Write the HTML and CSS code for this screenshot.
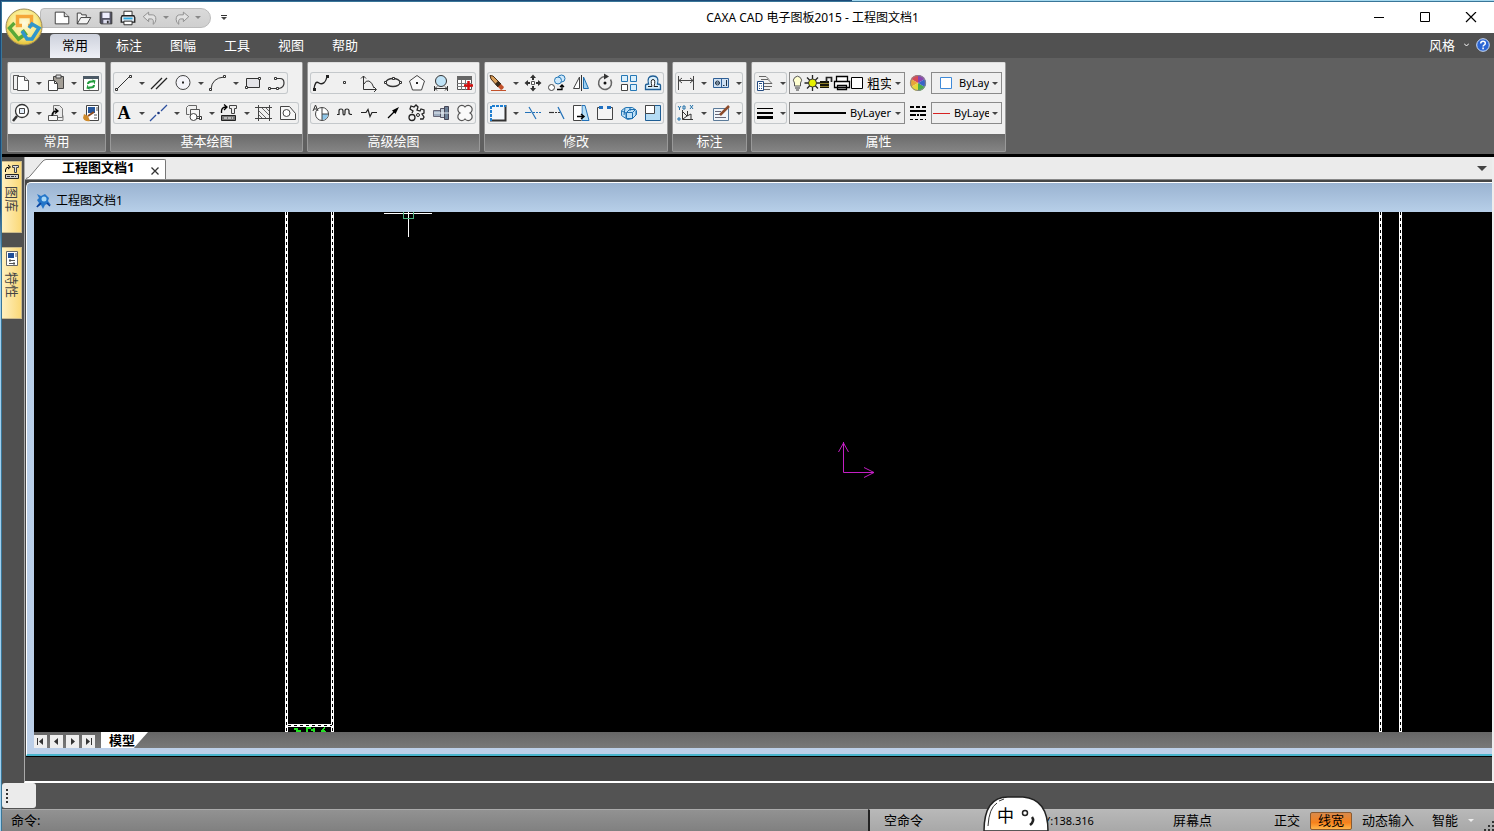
FILE: index.html
```html
<!DOCTYPE html>
<html lang="zh-CN">
<head>
<meta charset="utf-8">
<title>CAXA CAD 电子图板2015 - 工程图文档1</title>
<link rel="stylesheet" href="styles.css">
</head>
<body>
<div class="app">
  <header class="titlebar">
    <button class="orb" aria-label="菜单"><svg viewBox="0 0 38 38" width="38" height="38">
      <defs><radialGradient id="gold" cx=".5" cy=".4" r=".62"><stop offset="0" stop-color="#fffbe0"/><stop offset=".6" stop-color="#f8ea8a"/><stop offset="1" stop-color="#e3bb2a"/></radialGradient></defs>
      <circle cx="19" cy="19" r="18" fill="url(#gold)" stroke="#9a8a5a"/>
      <path d="M17 17.500h-4.500v-9h14v9H23" fill="none" stroke="#f5a738" stroke-width="3.500"/>
      <path d="M9.500 15L4.500 20l9 11 7-5-3-4" fill="none" stroke="#5aa838" stroke-width="3.500"/>
      <path d="M17 23l5 8h5l7-11-7-4-3 4" fill="none" stroke="#2f96cc" stroke-width="3.500"/></svg></button>
    <div class="quick">
      <button aria-label="新建"><svg viewBox="0 0 22 20"><path d="M3.500 3.500h10l5 5v8h-15z" fill="#fff" stroke="#333"/><path d="M13.500 3.500v5h5" fill="#ddd" stroke="#333"/></svg></button>
      <button aria-label="打开"><svg viewBox="0 0 22 20"><path d="M3.500 16.500v-12h4l1 2h5v3h5l-4 7z" fill="#f4f4f4" stroke="#333"/><path d="M3.500 16.500l4-7h6" fill="none" stroke="#333"/></svg></button>
      <button aria-label="保存"><svg viewBox="0 0 22 20"><path d="M4.500 3.500h13v13h-12l-1-1z" fill="#556" stroke="#333"/><path d="M7 4h8v6H7z" fill="#eef"/><path d="M8 12h7v4H8z" fill="#dde"/><path d="M12 13h2v3h-2z" fill="#333"/></svg></button>
      <button aria-label="打印"><svg viewBox="0 0 22 20"><path d="M6.500 8V2.500h9V8" fill="#fff" stroke="#222"/><path d="M4.500 7.500h13l1 2v5h-15v-5z" fill="#dfe8f0" stroke="#222" stroke-width="1.500"/><path d="M6 10.500h10" stroke="#2ba8e0" stroke-width="2"/><path d="M6.500 13.500h9v4h-9z" fill="#fff" stroke="#222"/></svg></button>
      <button aria-label="撤销"><svg viewBox="0 0 22 20"><path d="M3.500 8.500l6-5v3h4q4 0 4 5 0 4-3 5.500 1-6-2-6h-3v3z" fill="#e2e2e2" stroke="#8a8a8a"/></svg></button>
      <button class="more" aria-label="撤销列表"></button>
      <button aria-label="重做"><svg viewBox="0 0 22 20"><path d="M18.500 8.500l-6-5v3h-4q-4 0-4 5 0 4 3 5.500-1-6 2-6h3v3z" fill="#e2e2e2" stroke="#8a8a8a"/></svg></button>
      <button class="more" aria-label="重做列表"></button>
    </div>
    <button class="more custom" aria-label="自定义"></button>
    <h1>CAXA CAD 电子图板2015 - 工程图文档1</h1>
    <div class="winbtns">
      <button aria-label="最小化"><svg viewBox="0 0 12 12"><path d="M1 5.500h10" stroke="#000"/></svg></button>
      <button aria-label="最大化"><svg viewBox="0 0 12 12"><path d="M1.500 .5h9v9h-9z" fill="none" stroke="#000"/></svg></button>
      <button aria-label="关闭"><svg viewBox="0 0 12 12"><path d="M1 0l10 10M11 0L1 10" stroke="#000" stroke-width="1.200"/></svg></button>
    </div>
  </header>

  <nav class="menu">
    <button class="on">常用</button><button>标注</button><button>图幅</button><button>工具</button><button>视图</button><button>帮助</button>
    <button class="style">风格 <svg viewBox="0 0 5 4" width="5" height="4"><path d="M0 .5l2.500 2.500L5 .5" fill="none" stroke="#fff"/></svg></button>
    <button class="help" aria-label="帮助"><svg viewBox="0 0 14 14" width="14" height="14"><circle cx="7" cy="7" r="6.300" fill="#2c66d4" stroke="#cfe0fb"/><path d="M4.700 5.500q0-2.300 2.300-2.300t2.300 2q0 1.200-1.300 1.900-.9.500-.9 1.400" fill="none" stroke="#fff" stroke-width="1.500"/><path d="M6.300 9.600h1.600v1.600H6.300z" fill="#fff"/></svg></button>
  </nav>

  <div class="ribbon">
    <section class="panel">
      <div class="rows">
        <div class="tools">
          <button aria-label="复制"><svg viewBox="0 0 22 22"><path d="M8 17.500H3.500v-14H9" fill="none" stroke="#555"/><path d="M7.500 4.500h7l4 4v10h-11z" fill="#fff" stroke="#555"/><path d="M14.500 4.500v4h4" fill="#ddd" stroke="#555"/></svg></button>
          <button class="more" aria-label="更多"></button>
          <button aria-label="粘贴"><svg viewBox="0 0 22 22"><path d="M8.500 4.500h10v12h-10z" fill="#a39e96" stroke="#444"/><path d="M11 3h5v3h-5z" fill="#ddd" stroke="#444"/><path d="M3.500 8.500h6l3 3v7h-9z" fill="#fff" stroke="#444"/><path d="M9.500 8.500v3h3" fill="none" stroke="#444"/></svg></button>
          <button class="more" aria-label="更多"></button>
          <button aria-label="刷新"><svg viewBox="0 0 22 22"><path d="M3.500 4.500h15v14h-15z" fill="#fff" stroke="#555"/><path d="M3 4h16v3H3z" fill="#4c5a66"/><path d="M8 12q0-2.500 3.500-2.500H13M14 13q0 2.500-3.500 2.500H9" fill="none" stroke="#1f9a3a" stroke-width="2"/><path d="M12 7.500l3.500 1-1 4zM10 17.500l-3.500-1 1-4z" fill="#1f9a3a"/></svg></button>
        </div>
        <div class="tools">
          <button aria-label="缩放"><svg viewBox="0 0 22 22"><circle cx="12" cy="9" r="6.500" fill="#fff" stroke="#333" stroke-width="1.300"/><path d="M9.500 6.500h5v5h-5z" fill="#e4eefa" stroke="#444"/><path d="M7 14l-4 5" stroke="#333" stroke-width="2.500"/></svg></button>
          <button class="more" aria-label="更多"></button>
          <button aria-label="插入块"><svg viewBox="0 0 22 22"><path d="M8.500 3.500h6l3 3v9h-9z" fill="#e9e9e9" stroke="#777"/><path d="M3.500 13.500h9v5h-9z" fill="#f6f6f6" stroke="#555"/><path d="M17 13.500h1v5h-5" fill="none" stroke="#777"/><path d="M7 14q0-5 5-5M10 6.500l3 2.500-3 2.500" fill="none" stroke="#000" stroke-width="1.300"/></svg></button>
          <button class="more" aria-label="更多"></button>
          <button aria-label="特性匹配"><svg viewBox="0 0 22 22"><path d="M6.500 3.500h12v15h-12z" fill="#fff" stroke="#444"/><path d="M8 5h7v6H8z" fill="#27579c"/><path d="M16 6h2M16 8h2M14 13h3M14 16h3" stroke="#555"/><path d="M4 12l4 2 2 5q-5 1-7-3z" fill="#d08b2c"/><path d="M8 14l6-4" stroke="#8b4a1e" stroke-width="2"/></svg></button>
        </div>
      </div>
      <h2>常用</h2>
    </section>

    <section class="panel">
      <div class="rows">
        <div class="tools">
          <button aria-label="直线"><svg viewBox="0 0 22 22"><path d="M4 17L17 4" stroke="#333"/><path d="M2.500 16.500h2v2h-2zM16.500 3.500h2v2h-2z" fill="#fff" stroke="#333"/></svg></button>
          <button class="more" aria-label="更多"></button>
          <button aria-label="平行线"><svg viewBox="0 0 22 22"><path d="M3 17L14 6M8 17L19 6" stroke="#222" stroke-width="1.300"/></svg></button>
          <button aria-label="圆"><svg viewBox="0 0 22 22"><circle cx="11" cy="10.500" r="7" fill="#f4f4f9" stroke="#444"/><path d="M10 9.500h2v2h-2z" fill="#222"/></svg></button>
          <button class="more" aria-label="更多"></button>
          <button aria-label="圆弧"><svg viewBox="0 0 22 22"><path d="M4 17Q5 6 17 5" fill="none" stroke="#333"/><path d="M2.500 16.500h2v2h-2zM16.500 3.500h2v2h-2z" fill="#fff" stroke="#333"/></svg></button>
          <button class="more" aria-label="更多"></button>
          <button aria-label="矩形"><svg viewBox="0 0 22 22"><path d="M4.500 6.500h13v9h-13z" fill="#e4e4e8" stroke="#333"/><path d="M3.500 14.500h2v2h-2zM16.500 5.500h2v2h-2z" fill="#fff" stroke="#333"/></svg></button>
          <button aria-label="多段线"><svg viewBox="0 0 22 22"><path d="M4 16.500h7M11 6.500h3q4 0 4 4.500t-5 5.500" fill="none" stroke="#333" stroke-width="1.200"/><path d="M2.500 15.500h2v2h-2zM10.500 15.500h2v2h-2zM8.500 5.500h2v2h-2z" fill="#fff" stroke="#333"/></svg></button>
        </div>
        <div class="tools">
          <button aria-label="文字" class="letter">A</button>
          <button class="more" aria-label="更多"></button>
          <button aria-label="中心线"><svg viewBox="0 0 22 22"><path d="M2 19l6-6M13 9l6-6" stroke="#2c4f9e" stroke-width="1.300"/><circle cx="10.500" cy="11" r="1.300" fill="#17337c"/></svg></button>
          <button class="more" aria-label="更多"></button>
          <button aria-label="块"><svg viewBox="0 0 22 22"><path d="M3.500 12.500v-7l2-2h8v4M3.500 12.500h3" fill="none" stroke="#666"/><path d="M7.500 7.500h9v7h-9z" fill="#f6f6f6" stroke="#555"/><circle cx="10.500" cy="15" r="3.500" fill="#fff" stroke="#444"/><path d="M14 16.500h4" stroke="#444"/><path d="M16.500 14.500h2v3h-2z" fill="#fff" stroke="#333"/></svg></button>
          <button class="more" aria-label="更多"></button>
          <button aria-label="图库"><svg viewBox="0 0 22 22"><path d="M3.500 11v-2q0-4 5-4M6 2.500L9 5 6 8" fill="none" stroke="#000" stroke-width="1.300"/><path d="M11.500 3.500h7v3h-2v5h-3v-5h-2z" fill="#eee" stroke="#444"/><path d="M3.500 13.500h14v5h-14z" fill="#777" stroke="#222"/><path d="M6 16h9" stroke="#fff" stroke-dasharray="3 1"/></svg></button>
          <button class="more" aria-label="更多"></button>
          <button aria-label="剖面线"><svg viewBox="0 0 22 22"><path d="M2 5.500h17M2 16.500h17M5.500 3v16M16.500 3v16" stroke="#444"/><path d="M6 9l7 7M6 13l3 3M9 6l7 7M13 6l3 3" stroke="#666"/></svg></button>
          <button aria-label="填充"><svg viewBox="0 0 22 22"><path d="M3.500 4.500h9l6 7v6h-15z" fill="#f7f7f7" stroke="#444"/><circle cx="9.500" cy="11" r="3.500" fill="#fff" stroke="#444"/></svg></button>
        </div>
      </div>
      <h2>基本绘图</h2>
    </section>

    <section class="panel">
      <div class="rows">
        <div class="tools">
          <button aria-label="样条"><svg viewBox="0 0 22 22"><path d="M4 17c1-6 2-8 5-6s7 0 8-7" fill="none" stroke="#222" stroke-width="1.300"/><path d="M3 16h3v3H3zM16 3h3v3h-3z" fill="#222"/></svg></button>
          <button aria-label="点"><svg viewBox="0 0 22 22"><path d="M9.500 9.500h2v2h-2z" fill="#fff" stroke="#333"/></svg></button>
          <button aria-label="公式曲线"><svg viewBox="0 0 22 22"><path d="M5.500 4v13.500H18M3 6.500L5.500 4 8 6.500M16 15l2.500 2.500L16 20M6 12q2-4 5-3t5 7" fill="none" stroke="#333"/></svg></button>
          <button aria-label="椭圆"><svg viewBox="0 0 22 22"><ellipse cx="11" cy="10.500" rx="7" ry="4" fill="none" stroke="#333" stroke-width="1.300"/><path d="M10.500 5.500h2v2h-2zM2.500 9.500h2v2h-2zM17.500 9.500h2v2h-2z" fill="#fff" stroke="#333"/></svg></button>
          <button aria-label="正多边形"><svg viewBox="0 0 22 22"><path d="M11 3.500l7.500 5.500-3 9h-9l-3-9z" fill="#fafafa" stroke="#444"/><path d="M10 10h2v2h-2z" fill="#222"/></svg></button>
          <button aria-label="局部放大"><svg viewBox="0 0 22 22"><circle cx="11" cy="9" r="5.500" fill="#bfe3f7" stroke="#333"/><path d="M4.500 19v-5M17.500 19v-5M5 16.500h12M7 14.500l-2 2 2 2M15 14.500l2 2-2 2" fill="none" stroke="#333"/></svg></button>
          <button aria-label="表格"><svg viewBox="0 0 22 22"><path d="M3.500 4.500h14v13h-14z" fill="#fff" stroke="#555"/><path d="M3 4h15v4H3z" fill="#666"/><path d="M3 11.500h15M3 14.500h15M7.500 8v10M11.500 8v10" stroke="#777"/><path d="M14.500 9v9M10 13.500h9" stroke="#d40f0f" stroke-width="2.500"/></svg></button>
        </div>
        <div class="tools">
          <button aria-label="箭头圆"><svg viewBox="0 0 22 22"><circle cx="12" cy="12" r="6.500" fill="#fff" stroke="#444"/><path d="M12 12h6a6 6 0 0 1-6 6z" fill="#8fc6e8"/><path d="M12 5.500v13M12 12h6.500" stroke="#444"/><path d="M3 9l2.500-6L8 9M4 7h3" fill="none" stroke="#333"/></svg></button>
          <button aria-label="波浪线"><svg viewBox="0 0 22 22"><path d="M3 12.500h2V9q0-2 2-2t2 2v2q0 2 1 2t1-2V9q0-2 2-2t2 2v2q0 1.500 3 1.500" fill="none" stroke="#222" stroke-width="1.200"/></svg></button>
          <button aria-label="双折线"><svg viewBox="0 0 22 22"><path d="M3 10.500h5l2-3 2 7 2-4h5" fill="none" stroke="#222" stroke-width="1.200"/></svg></button>
          <button aria-label="箭头"><svg viewBox="0 0 22 22"><path d="M6 16l7-7" stroke="#000" stroke-width="1.300"/><path d="M17 5l-3.500 7-3.500-3.500z" fill="#000"/></svg></button>
          <button aria-label="齿轮"><svg viewBox="0 0 22 22"><path d="M6 11l1-2-3-2 1-3 3 1 2-2 2 2-1 3 3 1 1-2 3 1v3l-2 1 2 3-1 2h-3" fill="none" stroke="#222" stroke-width="1.300"/><circle cx="6" cy="15.500" r="3" fill="none" stroke="#222" stroke-width="1.300"/><circle cx="12" cy="13" r="1.500" fill="none" stroke="#222"/></svg></button>
          <button aria-label="孔轴"><svg viewBox="0 0 22 22"><path d="M3.500 8.500h7v6h-7z" fill="#9dadc0" stroke="#667"/><path d="M10.500 6.500h4v9h-4z" fill="#c2cdd8" stroke="#556"/><path d="M14.500 4.500h4v13h-4z" fill="#6d8097" stroke="#445"/><path d="M4 11h15" stroke="#e8eef5"/></svg></button>
          <button aria-label="云线"><svg viewBox="0 0 22 22"><path d="M6 11a4 4 0 1 1 5-6 4 4 0 1 1 5 6 4 4 0 1 1-5 6 4 4 0 1 1-5-6z" fill="#fafafa" stroke="#555" stroke-width="1.200"/></svg></button>
        </div>
      </div>
      <h2>高级绘图</h2>
    </section>

    <section class="panel">
      <div class="rows">
        <div class="tools">
          <button aria-label="删除"><svg viewBox="0 0 22 22"><path d="M3 3.500l3 .5 8 8-3 3-7-8z" fill="#d9a05c" stroke="#4a2c12"/><path d="M11 9l3 3-3 3-3-3z" fill="#3a2a1a"/><path d="M14 12l3 3q-1 3-3 3l-3-3z" fill="#c2512b"/><path d="M4 18.500h15" stroke="#c2512b"/></svg></button>
          <button class="more" aria-label="更多"></button>
          <button aria-label="平移"><svg viewBox="0 0 22 22"><path d="M11 2.500l3 3.500H8zM11 19.500l3-3.500H8zM2.500 11L6 8v6zM19.500 11L16 8v6z" fill="#333"/><path d="M11 6v2M11 14v2M6 11h2M14 11h2" stroke="#333" stroke-width="2"/><path d="M9.500 9.500h3v3h-3z" fill="#fff" stroke="#555"/></svg></button>
          <button aria-label="平移复制"><svg viewBox="0 0 22 22"><circle cx="15.500" cy="6.500" r="3.500" fill="#cfe9fb" stroke="#2577b5"/><circle cx="12" cy="8.500" r="3.500" fill="#cfe9fb" stroke="#2577b5"/><circle cx="5.500" cy="15.500" r="3" fill="#fff" stroke="#444"/><path d="M11 17.500h5v-4M14 15l2-2 2 2" fill="none" stroke="#000" stroke-width="1.300"/></svg></button>
          <button aria-label="镜像"><svg viewBox="0 0 22 22"><path d="M9.500 5v11.500h-6z" fill="#fff" stroke="#444"/><path d="M13.500 5v11.500h5z" fill="#9fd0f0" stroke="#1e6fb0"/><path d="M11.500 3v16" stroke="#333"/></svg></button>
          <button aria-label="旋转"><svg viewBox="0 0 22 22"><path d="M11 4.500a6.500 6.500 0 1 0 5.500 3" fill="none" stroke="#666" stroke-width="1.500"/><path d="M10 1.500l5 3-5 3z" fill="#333"/><circle cx="11" cy="11" r="1.500" fill="#111"/></svg></button>
          <button aria-label="阵列"><svg viewBox="0 0 22 22"><path d="M3.500 3.500h6v6h-6zM12.500 3.500h6v6h-6zM12.500 12.500h6v6h-6z" fill="#d9effc" stroke="#2577b5"/><path d="M3.500 12.500h6v6h-6z" fill="#fff" stroke="#444"/></svg></button>
          <button aria-label="偏移"><svg viewBox="0 0 22 22"><path d="M3.500 17.500v-4q0-1.500 3-1.500-2-8 4.500-8t4.500 8q3 0 3 1.500v4z" fill="#d9effc" stroke="#1e5d94" stroke-width="1.300"/><path d="M6 14.500h4q-2-7 1-7t1 7h4" fill="#fff" stroke="#222"/></svg></button>
        </div>
        <div class="tools">
          <button aria-label="裁剪框"><svg viewBox="0 0 22 22"><path d="M3.500 3.500h15v15h-15z" fill="#f3f7fb"/><path d="M18.500 3v15.500H3" fill="none" stroke="#333" stroke-width="2"/><path d="M4 19V4H19" fill="none" stroke="#1f7ed0" stroke-width="2" stroke-dasharray="3 1"/></svg></button>
          <button class="more" aria-label="更多"></button>
          <button aria-label="裁剪"><svg viewBox="0 0 22 22"><path d="M3 10.500h6M7 5l7 12" stroke="#2271b8" stroke-width="1.200"/><path d="M11 10.500h8" stroke="#2271b8" stroke-dasharray="2 1"/></svg></button>
          <button aria-label="延伸"><svg viewBox="0 0 22 22"><path d="M3 10.500h5" stroke="#333" stroke-width="1.200"/><path d="M9 10.500h5" stroke="#333" stroke-dasharray="2 1"/><path d="M12 5l6 12" stroke="#2271b8" stroke-width="1.200"/></svg></button>
          <button aria-label="拉伸"><svg viewBox="0 0 22 22"><path d="M12 3.500h3l4 15h-7z" fill="#b9dff5" stroke="#2271b8"/><path d="M11.500 3.500h-8v15h8" fill="#fff" stroke="#444"/><path d="M7 14.500h6M11 12l3 2.500-3 2.500" fill="none" stroke="#000" stroke-width="1.500"/></svg></button>
          <button aria-label="打断"><svg viewBox="0 0 22 22"><path d="M6 5.500H3.500v12h15v-12H16" fill="#f4f4f4" stroke="#444"/><path d="M5 5.500h4M13 5.500h4" stroke="#1f6fc0" stroke-width="3"/></svg></button>
          <button aria-label="分解"><svg viewBox="0 0 22 22"><path d="M3.500 8.500l4-3h7l4 3v4l-4 4-5 1-6-4z" fill="#bfe1f7" stroke="#2577b5"/><path d="M8.500 10.500h6v6h-6zM8.500 10.500l3-3h6l-3 3M4 9l4 2v5M7 6l-1 7M12 5v4M18 9v4l-3 3" fill="none" stroke="#1e6fb0"/></svg></button>
          <button aria-label="缩放图形"><svg viewBox="0 0 22 22"><path d="M3.500 3.500h15v15h-15z" fill="#b5dcf4" stroke="#1e5d94"/><path d="M3.500 3.500h9v8h-9z" fill="#fff" stroke="#444"/></svg></button>
        </div>
      </div>
      <h2>修改</h2>
    </section>

    <section class="panel">
      <div class="rows">
        <div class="tools">
          <button aria-label="尺寸标注"><svg viewBox="0 0 22 22"><path d="M3.500 4v14M18.500 4v14M4 8.500h14M7 6L4 8.500 7 11M15 6l3 2.500-3 2.500" fill="none" stroke="#444"/></svg></button>
          <button class="more" aria-label="更多"></button>
          <button aria-label="形位公差"><svg viewBox="0 0 22 22"><path d="M3.500 6.500h15v9h-15z" fill="#cfe0f2" stroke="#2f5f96"/><path d="M11.500 6v10" stroke="#2f5f96"/><circle cx="7.500" cy="11" r="2" fill="none" stroke="#234"/><path d="M5 11h5M16.500 8v6M13 13.500h1.500" stroke="#234"/></svg></button>
          <button class="more" aria-label="更多"></button>
        </div>
        <div class="tools">
          <button aria-label="坐标标注"><svg viewBox="0 0 22 22"><path d="M7.500 8v9.500H18M8 10l4 4 4-2v5M12.500 9v5M12 14l-4 3" fill="none" stroke="#333"/><path d="M3 4l1.500 2L6 4M4.500 6v2M15 3l3 4M18 3l-3 4M8 4h2v3H8zM3 16h2v2H3z" fill="none" stroke="#1f6fa8"/></svg></button>
          <button class="more" aria-label="更多"></button>
          <button aria-label="技术要求"><svg viewBox="0 0 22 22"><path d="M3.500 6.500h15v12h-15z" fill="#f1f5f9" stroke="#5b7a99"/><path d="M5 9.500h6M5 12.500h7M5 15.500h11" stroke="#667"/><path d="M10 13l9-9" stroke="#8c4b2b" stroke-width="2.500"/></svg></button>
          <button class="more" aria-label="更多"></button>
        </div>
      </div>
      <h2>标注</h2>
    </section>

    <section class="panel">
      <div class="rows">
        <div class="props">
          <div class="tools">
            <button aria-label="图层"><svg viewBox="0 0 22 22"><path d="M5 4.500h7l3 3M7 7.500h7l4 4M10 11.500h8M10 14.500h8M10 17.500h6" fill="none" stroke="#666"/><path d="M3.500 9.500h6v9h-6z" fill="#fff" stroke="#234a80"/><path d="M5 11.500h3M5 14h1M7 14h1M5 16.500h1M7 16.500h1" stroke="#234a80"/></svg></button>
            <button class="more" aria-label="更多"></button>
          </div>
          <div class="combo wide layer">
            <svg viewBox="0 0 73 20" width="73" height="20"><path d="M4.500 10a4 4 0 1 1 6 0v3h-6z" fill="#ffffd0" stroke="#555"/><path d="M5 15h5M6 17h3" stroke="#333"/><path d="M22.500 2v16M14.500 10h16M17 4.500l11 11M28 4.500l-11 11" stroke="#222" stroke-width="1.300"/><circle cx="22.500" cy="10" r="4" fill="#e6f000" stroke="#333"/><path d="M30 8h9v7h-9z" fill="#15150a"/><path d="M30 10.500h9M30 13.500h9" stroke="#8f7f2a"/><path d="M36.500 9V4.500h5V9" fill="none" stroke="#222" stroke-width="1.700"/><path d="M46.500 8V3.500h11V8M44.500 8.500h15v6h-15zM47.500 12.500h9v4h-9z" fill="#fff" stroke="#000" stroke-width="1.300"/><path d="M61.500 4.500h11v11h-11z" fill="#fff" stroke="#000"/></svg>
            <select aria-label="图层"><option>粗实线层</option></select>
          </div>
          <button class="ico" aria-label="颜色"><svg viewBox="0 0 22 22"><path d="M11 11V3a8 8 0 0 1 7 4z" fill="#8a44b0"/><path d="M11 11V3a8 8 0 0 0-7 4z" fill="#d94a56"/><path d="M11 11L4 7a8 8 0 0 0 0 8z" fill="#e7a53a"/><path d="M11 11l-7 4a8 8 0 0 0 7 4z" fill="#e7d83a"/><path d="M11 11v8a8 8 0 0 0 7-4z" fill="#4bac4b"/><path d="M11 11l7-4a8 8 0 0 1 0 8z" fill="#3a64c8"/><circle cx="11" cy="11" r="7.500" fill="none" stroke="#888"/></svg></button>
          <div class="combo">
            <svg viewBox="0 0 23 20" width="23" height="20"><path d="M8.500 4.500h11v11h-11z" fill="#fff" stroke="#3f8ad8"/></svg>
            <select aria-label="颜色"><option>ByLayer</option></select>
          </div>
        </div>
        <div class="props">
          <div class="tools">
            <button aria-label="线宽"><svg viewBox="0 0 22 22"><path d="M3 6.500h16" stroke="#000"/><path d="M3 11h16" stroke="#000" stroke-width="2"/><path d="M3 15.500h16" stroke="#000" stroke-width="3"/></svg></button>
            <button class="more" aria-label="更多"></button>
          </div>
          <div class="combo wide">
            <svg viewBox="0 0 56 20" width="56" height="20"><path d="M4 10h52" stroke="#000" stroke-width="2"/></svg>
            <select aria-label="线宽"><option>ByLayer</option></select>
          </div>
          <button class="ico" aria-label="线型"><svg viewBox="0 0 22 22"><path d="M3 5h16" stroke="#000" stroke-width="2" stroke-dasharray="4 2"/><path d="M3 9h16" stroke="#000" stroke-width="2"/><path d="M3 13h16" stroke="#000" stroke-width="2" stroke-dasharray="6 1 2 1"/><path d="M3 17.500h16" stroke="#000" stroke-dasharray="3 2"/></svg></button>
          <div class="combo">
            <svg viewBox="0 0 18 20" width="18" height="20"><path d="M1 10h17v1H1z" fill="#d62222"/></svg>
            <select aria-label="线型"><option>ByLayer</option></select>
          </div>
        </div>
      </div>
      <h2>属性</h2>
    </section>
  </div>

  <main class="work">
    <aside class="dock">
      <button><svg viewBox="0 0 16 16" width="16" height="16"><path d="M1.500 8V6q0-3 4-3M4 1l2.500 2L4 5" fill="none" stroke="#000"/><path d="M8.500 1.500h6v2h-2v5h-2v-5h-2z" fill="#ddd" stroke="#444"/><path d="M1.500 10.500h13v4h-13z" fill="#ccc" stroke="#222"/><path d="M3 12.500h9" stroke="#333" stroke-dasharray="3 1"/></svg><span>图库</span></button>
      <button><svg viewBox="0 0 16 16" width="16" height="16"><path d="M2.500 1.500h11v14h-11z" fill="#fff" stroke="#666"/><path d="M4 3h6v5H4z" fill="#204e98"/><path d="M11 4h2M11 6h2M5 10.500h6M5 13.500h6M6 9v3M10 12v3" stroke="#555"/></svg><span>特性</span></button>
    </aside>
    <div class="mdi">
      <div class="doctabs">
        <div class="doctab"><svg viewBox="0 0 20 20" width="20" height="20"><path d="M0 20Q2 20 4 17L16 3Q18 .5 20 .5V20z" fill="#fff"/><path d="M0 19.500Q3 19 5 16L16 3Q18 .5 20 .5" fill="none" stroke="#777"/></svg><button class="name">工程图文档1</button><button class="x" aria-label="关闭文档"><svg viewBox="0 0 8 8" width="8" height="8"><path d="M.5.5l7 7M7.500.5l-7 7" stroke="#333" stroke-width="1.300"/></svg></button></div>
        <button class="more big" aria-label="文档列表"></button>
      </div>
      <div class="child">
        <div class="childtitle"><svg viewBox="0 0 16 16" width="16" height="16"><path d="M2 1l4 2 4-2 4 4-1 3 3 4-4-1-2 1-2 4-2-4-5 2 3-4-2-3 2-2z" fill="#2476c9"/><circle cx="9" cy="6" r="2.500" fill="#a6d7f7"/><path d="M2 14l4-4M12 10l3 3" stroke="#0c3f98" stroke-width="1.500"/></svg>工程图文档1</div>
        <svg class="canvas" role="img" aria-label="图形窗口">
          <g stroke="#fff" stroke-width="3" shape-rendering="crispEdges"><path d="M252.500 0v521M298.500 0v521M1346.500 0v521M1366.500 0v521M252 513.500h47"/></g>
          <g stroke="#000" stroke-dasharray="3 3" shape-rendering="crispEdges"><path d="M252.500 0v521M298.500 0v521M1346.500 0v521M1366.500 0v521M254 513.500h44"/></g>
          <path d="M350 1.500h48M374.500 0v25" stroke="#fff" shape-rendering="crispEdges"/>
          <path d="M369.500 0v6.500h10V0" fill="none" stroke="#4fb583" shape-rendering="crispEdges"/>
          <path d="M809.500 230v30.500H840M804.500 240l5-9 5 9M830 255.500l10 5-10 5" fill="none" stroke="#c41fc4"/>
          <path d="M260 517h3v4M263 519h3v2M272 516h5M273 515v6M277 518h3M280 516v5M287 519l4-3M289 518v3M290 519l3 2" fill="none" stroke="#22e022" stroke-width="1.500" shape-rendering="crispEdges"/>
        </svg>
        <div class="sheets">
          <button aria-label="首页"><svg viewBox="0 0 13 13"><path d="M3.500 3v7" stroke="#333"/><path d="M9 3v7L5 6.500z" fill="#333"/></svg></button>
          <button aria-label="上一页"><svg viewBox="0 0 13 13"><path d="M8 3v7L4 6.500z" fill="#333"/></svg></button>
          <button aria-label="下一页"><svg viewBox="0 0 13 13"><path d="M5 3v7l4-3.500z" fill="#333"/></svg></button>
          <button aria-label="末页"><svg viewBox="0 0 13 13"><path d="M4 3v7l4-3.500z" fill="#333"/><path d="M9.500 3v7" stroke="#333"/></svg></button>
          <button class="model">模型</button>
        </div>
      </div>
    </div>
  </main>

  <div class="cmddock"><div class="grip"></div></div>

  <footer class="status">
    <div class="cmd"><label for="cmd">命令:</label><input id="cmd" type="text"></div>
    <div class="info">
      <span class="state">空命令</span>
      <span class="coord">Y:138.316</span>
      <span class="snap">屏幕点</span>
      <button>正交</button><button class="hot">线宽</button><button>动态输入</button><button>智能</button><button class="more light" aria-label="捕捉方式"></button>
      <svg class="size" viewBox="0 0 10 10" width="10" height="10"><path d="M8 0h2v2H8zM4 4h2v2H4zM8 4h2v2H8zM0 8h2v2H0zM4 8h2v2H4zM8 8h2v2H8z" fill="#333"/></svg>
      <div class="ime"><svg viewBox="0 0 66 35" width="66" height="35"><path d="M1 35Q1 1 25 1h15Q65 3 65 35z" fill="#fff" stroke="#222" stroke-width="1.500"/><path d="M5 30q1-18 9-23M16 5l5-2" fill="none" stroke="#333"/><circle cx="42" cy="17" r="2.500" fill="none" stroke="#222" stroke-width="1.500"/><path d="M49 21q3 4-2 8" fill="none" stroke="#222" stroke-width="2.500"/></svg><span>中</span></div>
    </div>
  </footer>
</div>
</body>
</html>
```
FILE: styles.css
```css
* { box-sizing: border-box; }
body {
  margin: 0;
  font: 13px/18px "Noto Sans", "Noto Sans CJK SC", sans-serif;
  color: #000;
}
h1, h2 { margin: 0; font-weight: 400; }
button {
  border: 0;
  padding: 0;
  margin: 0;
  background: none;
  font: inherit;
  color: inherit;
}
svg { display: block; flex: none; }

.app {
  height: 100vh;
  display: flex;
  flex-direction: column;
  padding: 2px 0 0 2px;
  background:
    linear-gradient(90deg, #1b4a78 57%, #a5d9ef 57%) top / 100% 1px no-repeat,
    linear-gradient(#1b4a78 25%, #9fd0ee 32%) left / 1px 100% no-repeat,
    #3a7698;
  overflow: hidden;
}

.more {
  width: 9px;
  flex: none;
  display: flex;
  align-items: center;
  justify-content: center;
}
.more::before {
  content: "";
  border: 3px solid transparent;
  border-top-color: #444;
  border-bottom: 0;
}

/* title bar */
.titlebar {
  flex: none;
  height: 31px;
  display: flex;
  align-items: center;
  background: #fff;
  position: relative;
}
.orb { position: absolute; left: 3px; top: 6px; z-index: 2; }
.quick {
  margin-left: 38px;
  padding: 0 7px 0 10px;
  height: 20px;
  display: flex;
  align-items: stretch;
  border: 1px solid #bbb;
  border-radius: 0 10px 10px 0;
  border-top-left-radius: 4px;
  background: linear-gradient(#dadada, #cfcfcf);
}
.quick svg { width: 22px; height: 18px; }
.quick .more { width: 10px; }
.quick .more::before { border-top-color: #888; }
.custom { width: 26px; flex-direction: column; gap: 1px; }
.custom::before { order: 2; }
.custom::after { content: ""; width: 6px; height: 1px; background: #333; }
.titlebar h1 {
  flex: 1;
  padding-left: 32px;
  text-align: center;
  font-size: 12px;
}
.winbtns { display: flex; align-self: stretch; }
.winbtns button { width: 46px; display: grid; place-items: center; }
.winbtns svg { width: 12px; height: 12px; }

/* menu */
.menu {
  flex: none;
  height: 25px;
  display: flex;
  gap: 4px;
  padding: 1px 4px 0 48px;
  background: #515151;
  color: #fff;
}
.menu button { padding: 0 12px 2px; }
.menu .on {
  color: #000;
  border-radius: 4px 4px 0 0;
  background: linear-gradient(#cdd1dc, #eef0f6);
}
.menu .style {
  margin-left: auto;
  padding: 0 3px 2px 0;
  display: flex;
  align-items: center;
  gap: 9px;
}
.menu .help { padding: 0 0 2px; }

/* ribbon */
.ribbon {
  flex: none;
  display: flex;
  align-items: flex-start;
  gap: 4px;
  padding: 4px 5px 2px;
  background: #606060;
  border-bottom: 3px solid #000;
}
.panel {
  border: 1px solid #999;
  border-top-color: #ddd;
  border-radius: 2px;
  background: #f0f0f0;
}
.rows {
  display: flex;
  flex-direction: column;
  align-items: flex-start;
  gap: 8px;
  padding: 9px 3px 10px 2px;
}
.tools {
  display: flex;
  gap: 2px;
  border-radius: 3px;
  box-shadow: inset 0 0 0 1px #c4c8cb;
}
.tools svg, .ico svg { width: 22px; height: 22px; }
.letter {
  width: 22px;
  font: bold 18px/22px "Liberation Serif", serif;
}
.panel h2 {
  height: 17px;
  font-size: 13px;
  line-height: 14px;
  text-align: center;
  color: #fff;
  background: linear-gradient(#6a6a6a, #848484);
}
.props { display: flex; gap: 2px; }
.combo {
  width: 71px;
  display: flex;
  align-items: center;
  border: 1px solid #8a8a8a;
  background: #efefef;
}
.combo::after {
  content: "";
  margin: 0 3px;
  border: 3px solid transparent;
  border-top-color: #444;
  border-bottom: 0;
}
.combo.wide { width: 116px; }
.combo select {
  appearance: none;
  flex: 1;
  min-width: 0;
  height: 20px;
  margin-left: 4px;
  padding: 0;
  border: 0;
  background: none;
  font: 11px/20px "Noto Sans", "Noto Sans CJK SC", sans-serif;
  color: #000;
}
.combo.layer select { font-size: 13px; }
.combo.layer::after { margin-left: 4px; }

/* work area */
.work { flex: 1; min-height: 0; display: flex; background: #505050; }
.dock {
  width: 22px;
  flex: none;
  display: flex;
  flex-direction: column;
  gap: 14px;
  padding: 4px 2px 0 0;
}
.dock button {
  height: 72px;
  display: flex;
  flex-direction: column;
  align-items: center;
  gap: 6px;
  padding-top: 2px;
  border: 1px solid #c9b98c;
  border-left: 0;
  background: linear-gradient(90deg, #fff0c0, #fbd978);
  color: #444;
}
.dock span { writing-mode: vertical-rl; text-orientation: sideways; line-height: 16px; }
.mdi {
  flex: 1;
  min-width: 0;
  display: flex;
  flex-direction: column;
  padding-bottom: 25px;
  border-right: 2px solid #eee;
  border-bottom: 2px solid #fff;
  border-left: 1px solid #aaa;
  background: #464646;
}
.doctabs {
  flex: none;
  height: 23px;
  display: flex;
  align-items: flex-end;
  justify-content: space-between;
  padding-right: 4px;
  background: #ebebeb;
  border-bottom: 1px solid #888;
}
.doctab { display: flex; height: 20px; margin-left: 1px; }
.doctab .name {
  padding: 0 4px 4px 16px;
  border-top: 1px solid #777;
  background: #fff;
  font-weight: 700;
  line-height: 15px;
}
.doctab .x {
  width: 28px;
  padding: 3px 0 0 7px;
  display: grid;
  place-items: center;
  border-top: 1px solid #777;
  border-right: 1px solid #777;
  border-radius: 0 2px 0 0;
  background: #fff;
}
.more.big { width: 12px; align-self: center; }
.more.big::before { border-width: 5px; border-bottom: 0; }
.child {
  flex: 1;
  min-height: 0;
  display: flex;
  flex-direction: column;
  margin: 2px 0 0 1px;
  padding: 0 0 6px 7px;
  border-top: 1px solid #fff;
  border-left: 1px solid #fff;
  border-bottom: 2px solid #48b4cc;
  border-radius: 5px 0 0 0;
  background: linear-gradient(#9ab3d1, #b8d0e9 30px, #bccfe8);
  box-shadow: 0 1px #000;
}
.childtitle {
  flex: none;
  height: 29px;
  display: flex;
  align-items: center;
  gap: 5px;
  padding: 6px 0 0 1px;
  font-size: 12px;
}
.canvas { flex: 1; min-height: 0; width: 100%; background: #000; }
.sheets {
  flex: none;
  height: 16px;
  display: flex;
  gap: 3px;
  background: linear-gradient(#666, #787878);
}
.sheets button { width: 13px; background: #eee; margin-top: 3px; }
.sheets button svg { width: 13px; height: 13px; }
.sheets .model {
  width: 47px;
  margin: 0 0 0 3px;
  padding-left: 8px;
  text-align: left;
  font-weight: 700;
  line-height: 16px;
  background: #fff;
  clip-path: polygon(0 0, 100% 0, 70% 100%, 0 100%);
}

/* command dock and status bar */
.cmddock { flex: none; height: 26px; background: #535353; }
.grip {
  width: 34px;
  height: 25px;
  padding: 6px 0 0 4px;
  border-radius: 3px;
  background: #ebebeb;
}
.grip::before {
  content: "";
  display: block;
  width: 2px;
  height: 14px;
  background: repeating-linear-gradient(#333 0 2px, transparent 2px 4px);
}
.status { flex: none; height: 22px; display: flex; line-height: 21px; }
.cmd {
  flex: 1;
  min-width: 0;
  display: flex;
  padding-left: 9px;
  border-top: 1px solid #aaa;
  background: linear-gradient(#929292, #808080);
}
.cmd input { flex: 1; min-width: 0; border: 0; background: none; font: inherit; outline: 0; }
.info {
  flex: 0 0 626px;
  display: flex;
  align-items: center;
  padding-left: 14px;
  border-left: 2px solid #222;
  border-top: 1px solid #bbb;
  background: linear-gradient(#b8b8b8, #a8a8a8);
  position: relative;
}
.coord { margin-left: 121px; font-size: 11px; }
.snap { margin-left: auto; margin-right: 62px; }
.info button { margin-right: 10px; }
.info .hot {
  height: 18px;
  padding: 0 7px;
  line-height: 15px;
  border: 1px solid #8a5a30;
  border-radius: 2px;
  background: linear-gradient(#d98a4c, #f7821c 60%, #ffb54a);
}
.info .hot + button { margin-right: 18px; }
.info .light { margin-right: 9px; margin-left: -2px; }
.light::before { border-top-color: #eee; }
.size { align-self: flex-end; }
.ime { position: absolute; left: 113px; bottom: 0; }
.ime span { position: absolute; left: 14px; top: 9px; font-size: 17px; }
```
